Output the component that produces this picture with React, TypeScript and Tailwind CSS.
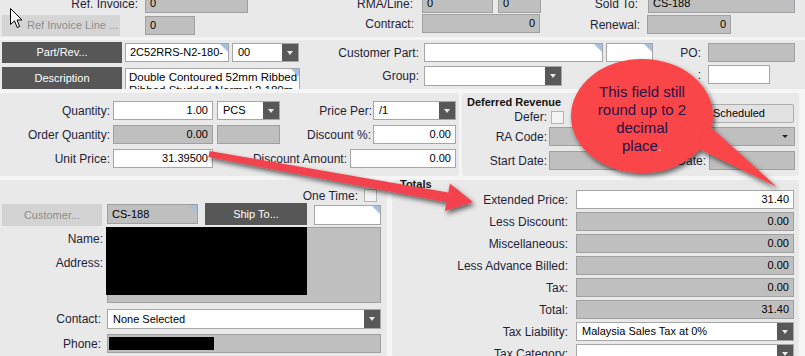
import React from "react";

function Tri() {
  return (
    <span className="absolute top-0 right-0 w-0 h-0 border-t-[8px] border-l-[8px] border-t-[#a7bfdf] border-l-transparent" />
  );
}

function WArrow() {
  return <span className="w-0 h-0 border-l-[3.5px] border-r-[3.5px] border-t-[4px] border-l-transparent border-r-transparent border-t-[#e8e8e8]" />;
}

type FieldProps = {
  cls: string;
  gray?: boolean;
  right?: boolean;
  tri?: boolean;
  children?: React.ReactNode;
};

function Field({ cls, gray, right, tri, children }: FieldProps) {
  return (
    <div
      className={`relative shrink-0 border flex items-center px-[4px] overflow-hidden whitespace-nowrap text-[11px] text-black ${
        gray ? "bg-[#bfbfbf] border-[#a0a0a0]" : "bg-white border-[#a6a6a6]"
      } ${right ? "justify-end" : ""} ${cls}`}
    >
      {children}
      {tri && <Tri />}
    </div>
  );
}

function Combo({ cls, children, gray }: { cls: string; children?: React.ReactNode; gray?: boolean }) {
  return (
    <div
      className={`relative shrink-0 border flex items-stretch text-[11px] text-black ${
        gray ? "bg-[#bfbfbf] border-[#a0a0a0]" : "bg-white border-[#a6a6a6]"
      } ${cls}`}
    >
      <div className="flex-1 flex items-center pl-[5px] overflow-hidden whitespace-nowrap">{children}</div>
      <div className="w-[16px] bg-[#585858] flex items-center justify-center">
        <WArrow />
      </div>
    </div>
  );
}

function L({ cls, children }: { cls: string; children?: React.ReactNode }) {
  return (
    <div className={`shrink-0 flex justify-end items-center whitespace-nowrap text-[12px] text-[#1f1f38] ${cls}`}>
      {children}
    </div>
  );
}

function DarkBtn({ cls, children }: { cls: string; children?: React.ReactNode }) {
  return (
    <div className={`shrink-0 bg-[#575757] text-white text-[11px] flex items-center justify-center whitespace-nowrap ${cls}`}>
      {children}
    </div>
  );
}

function Check({ cls }: { cls: string }) {
  return <div className={`shrink-0 w-[13px] h-[13px] bg-[#f3f3f3] border border-[#b4b4b4] ${cls}`} />;
}

export default function App() {
  return (
    <div className="relative w-[805px] h-[356px] overflow-hidden bg-[#f5f5f5] font-['Liberation_Sans',Arial,sans-serif] text-[12px] text-black">
      {/* Section 1 */}
      <div className="h-[37px] bg-[#e9e9e9] overflow-hidden">
        <div className="-mt-[6px] flex flex-col">
          <div className="flex items-start h-[20px]">
            <L cls="w-[138px] h-[19px]">Ref. Invoice:</L>
            <Field gray cls="ml-[7px] w-[103px] h-[19px]">0</Field>
            <L cls="w-[165px] h-[19px]">RMA/Line:</L>
            <Field gray cls="ml-[9px] w-[71px] h-[19px]">0</Field>
            <Field gray cls="ml-[5px] w-[43px] h-[19px]">0</Field>
            <L cls="w-[97px] h-[19px]">Sold To:</L>
            <Field gray tri cls="ml-[10px] w-[147px] h-[19px]">CS-188</Field>
          </div>
          <div className="flex items-start h-[22px]">
            <div className="shrink-0 ml-[2px] mt-[1px] w-[118px] h-[21px] bg-[#d5d5d5] text-[#8e8e8e] text-[11px] flex items-center pl-[25px] whitespace-nowrap">
              Ref Invoice Line ...
            </div>
            <Field gray cls="ml-[25px] mt-[2px] w-[50px] h-[19px]">0</Field>
            <L cls="w-[219px] h-[19px]">Contract:</L>
            <Field gray right cls="ml-[8px] w-[118px] h-[19px]">0</Field>
            <L cls="mt-[1px] w-[100px] h-[19px]">Renewal:</L>
            <Field gray right cls="ml-[7px] mt-[1px] w-[84px] h-[19px]">0</Field>
          </div>
        </div>
      </div>

      {/* Section 2 */}
      <div className="mt-[3px] h-[49px] bg-[#e9e9e9] overflow-hidden pt-[2px]">
        <div className="flex items-start h-[22px]">
          <DarkBtn cls="ml-[2px] w-[120px] h-[21px]">Part/Rev...</DarkBtn>
          <Field tri cls="ml-[3px] mt-[1px] w-[104px] h-[19px]">2C52RRS-N2-180-</Field>
          <Combo cls="ml-[3px] mt-[1px] w-[67px] h-[19px]">00</Combo>
          <L cls="mt-[1px] w-[120px] h-[19px]">Customer Part:</L>
          <Field tri cls="ml-[5px] mt-[1px] w-[179px] h-[19px]" />
          <Field tri cls="ml-[3px] mt-[1px] w-[47px] h-[19px]" />
          <L cls="mt-[1px] w-[48px] h-[19px]">PO:</L>
          <Field gray cls="ml-[7px] mt-[1px] w-[87px] h-[19px]" />
        </div>
        <div className="flex items-start mt-[2px]">
          <DarkBtn cls="ml-[2px] mt-[1px] w-[120px] h-[22px]">Description</DarkBtn>
          <div className="relative shrink-0 ml-[3px] mt-[2px] w-[175px] h-[26px] bg-white border border-[#a6a6a6] px-[3px] pt-[2px] text-[11.5px] leading-[13px] whitespace-nowrap overflow-hidden">
            Double Contoured 52mm Ribbed
            <br />
            Ribbed Studded Normal 2.180m
            <Tri />
          </div>
          <L cls="w-[119px] h-[20px]">Group:</L>
          <Combo cls="ml-[5px] w-[138px] h-[20px]" />
          <L cls="-mt-[1px] w-[139px] h-[19px]">:</L>
          <Field cls="ml-[7px] -mt-[1px] w-[62px] h-[19px]" />
        </div>
      </div>

      {/* Section 3 */}
      <div className="mt-[4px] h-[83px] flex gap-[3px]">
        <div className="w-[459px] bg-[#e9e9e9] rounded-r-[3px] pt-[8px] flex flex-col gap-[5px]">
          <div className="flex items-center h-[19px]">
            <L cls="w-[110px] h-[19px]">Quantity:</L>
            <Field right cls="ml-[3px] w-[100px] h-[19px]">1.00</Field>
            <Combo cls="ml-[4px] w-[63px] h-[19px]">PCS</Combo>
            <L cls="w-[92px] h-[19px]">Price Per:</L>
            <Combo cls="ml-[1px] w-[83px] h-[19px]">/1</Combo>
          </div>
          <div className="flex items-center h-[19px]">
            <L cls="w-[110px] h-[19px]">Order Quantity:</L>
            <Field gray right cls="ml-[3px] w-[100px] h-[19px]">0.00</Field>
            <Field gray cls="ml-[4px] w-[63px] h-[19px]" />
            <L cls="w-[91px] h-[19px]">Discount %:</L>
            <Field right cls="ml-[2px] w-[83px] h-[19px]">0.00</Field>
          </div>
          <div className="flex items-center h-[19px]">
            <L cls="w-[110px] h-[19px]">Unit Price:</L>
            <Field right cls="ml-[3px] w-[100px] h-[19px]">31.39500</Field>
            <L cls="w-[134px] h-[19px]">Discount Amount:</L>
            <Field right cls="ml-[3px] w-[106px] h-[19px]">0.00</Field>
          </div>
        </div>

        <div className="w-[337px] bg-[#e9e9e9] rounded-[4px] flex flex-col">
          <div className="flex items-start">
            <div className="w-[222px] flex flex-col">
              <div className="pl-[5px] pt-[3px] h-[15px] font-bold text-[11px] leading-[12px] text-[#111]">Deferred Revenue</div>
              <div className="flex items-center mt-[2px] h-[14px]">
                <L cls="w-[85px] h-[14px]">Defer:</L>
                <Check cls="ml-[4px]" />
              </div>
            </div>
            <div className="shrink-0 mt-[11px] w-[110px] h-[19px] bg-[#e2e2e2] border border-[#acacac] rounded-[2px] text-[11px] flex items-center justify-center">
              Scheduled
            </div>
          </div>
          <div className="flex items-center mt-[3px] h-[19px]">
            <L cls="w-[85px] h-[19px]">RA Code:</L>
            <div className="shrink-0 ml-[2px] w-[246px] h-[19px] bg-[#bfbfbf] border border-[#a0a0a0] flex items-center justify-end pr-[6px]">
              <span className="w-0 h-0 border-l-[3px] border-r-[3px] border-t-[3px] border-l-transparent border-r-transparent border-t-[#222]" />
            </div>
          </div>
          <div className="flex items-center mt-[5px] h-[19px]">
            <L cls="w-[85px] h-[19px]">Start Date:</L>
            <Field gray cls="ml-[2px] w-[95px] h-[19px]" />
            <L cls="w-[62px] h-[19px]">End Date:</L>
            <Field gray cls="ml-[3px] w-[86px] h-[19px]" />
          </div>
        </div>
      </div>

      {/* Section 4 */}
      <div className="mt-[4px] h-[176px] flex gap-[5px]">
        <div className="w-[387px] bg-[#e9e9e9] rounded-r-[3px] pt-[9px] flex flex-col overflow-hidden">
          <div className="flex items-center h-[13px]">
            <L cls="w-[358px] h-[13px]">One Time:</L>
            <Check cls="ml-[6px]" />
          </div>
          <div className="flex items-start mt-[2px] h-[22px]">
            <div className="shrink-0 ml-[2px] w-[100px] h-[22px] bg-[#d3d3d3] text-[#8c8c8c] text-[11px] flex items-center justify-center whitespace-nowrap">
              Customer...
            </div>
            <Field gray tri cls="ml-[5px] w-[91px] h-[20px]">CS-188</Field>
            <DarkBtn cls="ml-[7px] -mt-[1px] w-[102px] h-[22px]">Ship To...</DarkBtn>
            <Field tri cls="ml-[7px] mt-[1px] w-[67px] h-[20px]" />
          </div>
          <div className="flex items-start mt-[1px]">
            <div className="shrink-0 w-[103px] pt-[5px] flex flex-col items-end text-[12px] text-[#1f1f38] leading-[14px]">
              <div className="h-[14px]">Name:</div>
              <div className="h-[14px] mt-[10px]">Address:</div>
            </div>
            <div className="shrink-0 ml-[4px] w-[274px] h-[76px] bg-[#bfbfbf] border border-[#a0a0a0]">
              <div className="-ml-[2px] -mt-[1px] w-[201px] h-[68px] bg-black" />
            </div>
          </div>
          <div className="flex items-center mt-[6px] h-[20px]">
            <L cls="w-[101px] h-[20px]">Contact:</L>
            <Combo cls="ml-[6px] w-[274px] h-[20px]">None Selected</Combo>
          </div>
          <div className="flex items-center mt-[5px] h-[19px]">
            <L cls="w-[101px] h-[19px]">Phone:</L>
            <div className="shrink-0 ml-[6px] w-[274px] h-[19px] bg-[#bfbfbf] border border-[#a0a0a0] flex items-center pl-[1px]">
              <div className="w-[105px] h-[13px] bg-black" />
            </div>
          </div>
        </div>

        <div className="w-[407px] bg-[#e9e9e9] rounded-[4px] flex flex-col overflow-hidden">
          <div className="pl-[8px] -mt-[1px] h-[11px] font-bold text-[11px] leading-[11px] text-[#111]">Totals</div>
          <div className="flex flex-col gap-[3px]">
            {[
              ["Extended Price:", "31.40", false],
              ["Less Discount:", "0.00", true],
              ["Miscellaneous:", "0.00", true],
              ["Less Advance Billed:", "0.00", true],
              ["Tax:", "0.00", true],
              ["Total:", "31.40", true],
            ].map(([label, val, gray]) => (
              <div key={label as string} className="flex items-center h-[19px]">
                <L cls="w-[176px] h-[19px]">{label as string}</L>
                <Field gray={gray as boolean} right cls="ml-[8px] w-[218px] h-[19px]">
                  {val as string}
                </Field>
              </div>
            ))}
            <div className="flex items-center h-[19px]">
              <L cls="w-[176px] h-[19px]">Tax Liability:</L>
              <Combo cls="ml-[8px] w-[218px] h-[19px]">Malaysia Sales Tax at 0%</Combo>
            </div>
            <div className="flex items-center h-[19px]">
              <L cls="w-[176px] h-[19px]">Tax Category:</L>
              <Combo cls="ml-[8px] w-[218px] h-[19px]" />
            </div>
          </div>
        </div>
      </div>

      {/* Annotations */}
      <svg className="absolute left-0 top-0 pointer-events-none" width="805" height="356" viewBox="0 0 805 356">
        <defs>
          <filter id="sh" x="-20%" y="-30%" width="140%" height="170%">
            <feDropShadow dx="2" dy="3" stdDeviation="2.5" floodColor="#000" floodOpacity="0.6" />
          </filter>
        </defs>
        <polygon
          points="209.6,150.9 448.3,192.4 449.9,183.5 473,202 444.9,211.1 446.5,202.2 208.4,157.1"
          fill="#f2434d"
          filter="url(#sh)"
        />
        <g filter="url(#sh)" fill="#fa4448">
          <ellipse cx="642" cy="116" rx="71" ry="57" />
          <polygon points="705,122 777,187 697,148" />
        </g>
      </svg>
      <div className="absolute left-[572px] top-[83px] w-[140px] text-center text-[15px] leading-[18px] text-[#271447] pointer-events-none">
        This field still
        <br />
        round up to 2
        <br />
        decimal
        <br />
        place<span className="text-white">.</span>
      </div>
      <svg className="absolute left-[10px] top-[8px] pointer-events-none" width="13" height="21" viewBox="0 0 13 21">
        <path d="M0.5 0.5 V16.5 L4.5 12.8 L7.2 19.5 L9.6 18.5 L7 12 H12 Z" fill="white" stroke="black" strokeWidth="1" strokeLinejoin="miter" />
      </svg>
    </div>
  );
}
